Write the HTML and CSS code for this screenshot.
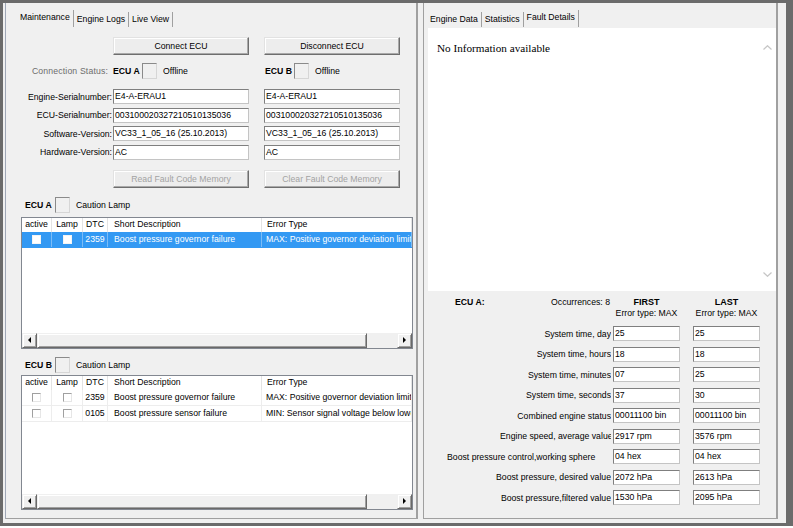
FILE: index.html
```html
<!DOCTYPE html>
<html>
<head>
<meta charset="utf-8">
<title>ECU Maintenance</title>
<link rel="stylesheet" href="styles.css">
</head>
<body>
<div class="window">
  <section class="panel left">
    <div class="tabs">
      <div class="tab sel">Maintenance</div>
      <div class="tab">Engine Logs</div>
      <div class="tab">Live View</div>
    </div>
    <div class="page">
      <div class="frow btnrow">
        <span class="lbl"></span>
        <button class="btn">Connect ECU</button>
        <button class="btn b2">Disconnect ECU</button>
      </div>
      <div class="frow status">
        <span class="lbl muted">Connection Status:</span>
        <div class="stat"><b>ECU A</b><span class="box"></span><span>Offline</span></div>
        <div class="stat b2 sb"><b>ECU B</b><span class="box"></span><span>Offline</span></div>
      </div>
      <div class="fields">
        <div class="frow"><span class="lbl">Engine-Serialnumber:</span><span class="inp">E4-A-ERAU1</span><span class="inp b2">E4-A-ERAU1</span></div>
        <div class="frow"><span class="lbl">ECU-Serialnumber:</span><span class="inp">003100020327210510135036</span><span class="inp b2">003100020327210510135036</span></div>
        <div class="frow"><span class="lbl">Software-Version:</span><span class="inp">VC33_1_05_16 (25.10.2013)</span><span class="inp b2">VC33_1_05_16 (25.10.2013)</span></div>
        <div class="frow"><span class="lbl">Hardware-Version:</span><span class="inp">AC</span><span class="inp b2">AC</span></div>
      </div>
      <div class="frow btnrow btnrow2">
        <span class="lbl"></span>
        <button class="btn dis">Read Fault Code Memory</button>
        <button class="btn dis b2">Clear Fault Code Memory</button>
      </div>

      <div class="lamp"><b>ECU A</b><span class="box"></span><span>Caution Lamp</span></div>
      <div class="list la">
        <div class="grid lhead"><span class="c">active</span><span class="c">Lamp</span><span class="c">DTC</span><span>Short Description</span><span>Error Type</span></div>
        <div class="grid lrow selrow"><span class="c"><i class="cb"></i></span><span class="c"><i class="cb"></i></span><span class="c">2359</span><span>Boost pressure governor failure</span><span>MAX: Positive governor deviation limit exceeded</span></div>
        <div class="lfill"></div>
        <div class="hs">
          <span class="arr raised"><i class="tri-l"></i></span>
          <span class="thumb raised"></span>
          <span class="track"></span>
          <span class="arr raised"><i class="tri-r"></i></span>
        </div>
      </div>

      <div class="lamp lampb"><b>ECU B</b><span class="box"></span><span>Caution Lamp</span></div>
      <div class="list lb">
        <div class="grid lhead"><span class="c">active</span><span class="c">Lamp</span><span class="c">DTC</span><span>Short Description</span><span>Error Type</span></div>
        <div class="grid lrow"><span class="c"><i class="cb"></i></span><span class="c"><i class="cb"></i></span><span class="c">2359</span><span>Boost pressure governor failure</span><span>MAX: Positive governor deviation limit exceeded</span></div>
        <div class="grid lrow"><span class="c"><i class="cb"></i></span><span class="c"><i class="cb"></i></span><span class="c">0105</span><span>Boost pressure sensor failure</span><span>MIN: Sensor signal voltage below lower limit</span></div>
        <div class="lfill"></div>
        <div class="hs">
          <span class="arr raised"><i class="tri-l"></i></span>
          <span class="thumb raised"></span>
          <span class="track"></span>
          <span class="arr raised"><i class="tri-r"></i></span>
        </div>
      </div>
    </div>
  </section>

  <section class="panel right">
    <div class="tabs rtabs">
      <div class="tab">Engine Data</div>
      <div class="tab">Statistics</div>
      <div class="tab sel">Fault Details</div>
    </div>
    <div class="rich">
      <div class="rtext">No Information available</div>
      <div class="vscroll">
        <svg width="9" height="5" viewBox="0 0 9 5"><polyline points="0.5,4.5 4.5,0.7 8.5,4.5" fill="none" stroke="#c6c6c6" stroke-width="1.2"/></svg>
        <svg width="9" height="5" viewBox="0 0 9 5"><polyline points="0.5,0.5 4.5,4.3 8.5,0.5" fill="none" stroke="#c6c6c6" stroke-width="1.2"/></svg>
      </div>
    </div>
    <div class="det">
      <div class="dhead">
        <div class="dcell1"><b>ECU A:</b><span>Occurrences: 8</span></div>
        <div class="dcol"><b>FIRST</b><span>Error type: MAX</span></div>
        <div class="dcol d2"><b>LAST</b><span>Error type: MAX</span></div>
      </div>
      <div class="drows">
        <div class="drow"><span class="dl"><span>System time, day</span></span><span class="dv">25</span><span class="dv d2">25</span></div>
        <div class="drow"><span class="dl"><span>System time, hours</span></span><span class="dv">18</span><span class="dv d2">18</span></div>
        <div class="drow"><span class="dl"><span>System time, minutes</span></span><span class="dv">07</span><span class="dv d2">25</span></div>
        <div class="drow"><span class="dl"><span>System time, seconds</span></span><span class="dv">37</span><span class="dv d2">30</span></div>
        <div class="drow"><span class="dl"><span>Combined engine status</span></span><span class="dv">00011100 bin</span><span class="dv d2">00011100 bin</span></div>
        <div class="drow"><span class="dl"><span class="clip-a">Engine speed, average value</span></span><span class="dv">2917 rpm</span><span class="dv d2">3576 rpm</span></div>
        <div class="drow"><span class="dl"><span class="clip-b">Boost pressure control,working sphere</span></span><span class="dv">04 hex</span><span class="dv d2">04 hex</span></div>
        <div class="drow"><span class="dl"><span>Boost pressure, desired value</span></span><span class="dv">2072 hPa</span><span class="dv d2">2613 hPa</span></div>
        <div class="drow"><span class="dl"><span>Boost pressure,filtered value</span></span><span class="dv">1530 hPa</span><span class="dv d2">2095 hPa</span></div>
      </div>
    </div>
  </section>
</div>
</body>
</html>
```
FILE: styles.css
```css
* { box-sizing: border-box; }

body {
  margin: 0;
  background: #ffffff;
  font-family: "Liberation Sans", Arial, sans-serif;
  font-size: 8.7px;
  color: #000;
}

.window {
  width: 793px;
  height: 526px;
  border-style: solid;
  border-color: #6b6b6b;
  border-width: 3px 7px 3px 3px;
  background: #f0f0f0;
  display: flex;
  align-items: flex-start;
  gap: 5px;
  padding-left: 2px;
}

.panel {
  height: 516px;
  border-bottom: 1px solid #a0a0a0;
  background: #f0f0f0;
  padding-top: 7px;
}

.left {
  width: 413px;
  border-left: 1px solid #9fa7b6;
  border-right: 2px solid #a0a0a0;
}

.right {
  width: 355px;
  border-left: 1px solid #a0a0a0;
  border-right: 2px solid #a0a0a0;
  padding-left: 4px;
}

/* tabs */
.tabs {
  display: flex;
  align-items: flex-end;
  height: 17px;
  margin-left: 11px;
}
.rtabs { margin-left: -1px; }

.tab {
  height: 15px;
  line-height: 15px;
  padding: 0 3px;
  border-right: 1px solid #a0a0a0;
  white-space: nowrap;
}
.tab.sel {
  height: 17px;
  line-height: 14px;
}

/* left form */
.page { padding-top: 10px; }

.frow {
  display: flex;
  align-items: center;
  height: 15px;
}

.lbl {
  flex: none;
  width: 107px;
  text-align: right;
  padding-right: 1px;
  white-space: nowrap;
}
.muted {
  color: #6d6d6d;
  padding-right: 5px;
  letter-spacing: 0.15px;
}

.b2 { margin-left: 15px; }

.btnrow { height: 18px; }
.btnrow2 { margin-top: 10.2px; }

.btn {
  flex: none;
  width: 136px;
  height: 18px;
  padding: 0;
  font: inherit;
  color: #000;
  background: #ededed;
  border: 1px solid;
  border-color: #e2e2e2 #6e6e6e #6e6e6e #e2e2e2;
  box-shadow: inset -1px -1px 0 #a9a9a9, inset 1px 1px 0 #ffffff;
}
.btn.dis { color: #a3a3a3; }

.status {
  height: 16px;
  margin-top: 8px;
}
.stat {
  flex: none;
  width: 136px;
  display: flex;
  align-items: center;
}
.stat.sb { padding-left: 1px; }
.stat b { width: 29px; }

.box {
  flex: none;
  width: 15px;
  height: 16px;
  border: 1px solid;
  border-color: #8a8a8a #d6d6d6 #d6d6d6 #8a8a8a;
  background: #f0f0f0;
  margin-right: 6px;
}

.fields {
  margin-top: 10px;
  display: flex;
  flex-direction: column;
  gap: 3.6px;
}

.inp {
  flex: none;
  width: 136px;
  height: 15px;
  background: #fff;
  border: 1px solid;
  border-color: #7f7f7f #c4c4c4 #c4c4c4 #7f7f7f;
  line-height: 13px;
  padding-left: 1px;
  white-space: nowrap;
  overflow: hidden;
}

.lamp {
  display: flex;
  align-items: center;
  height: 16px;
  margin: 9px 0 0 19px;
}
.lampb { margin-top: 8px; }
.lamp b { width: 30px; }

/* list views */
.list {
  margin-left: 15px;
  width: 392px;
  height: 132px;
  margin-top: 4px;
  border: 1px solid #828790;
  background: #fff;
  display: flex;
  flex-direction: column;
  overflow: hidden;
}
.list.lb {
  height: 135px;
  margin-top: 2px;
}

.grid {
  display: grid;
  grid-template-columns: 30px 31px 25px 154px 1fr;
}

.lhead { height: 14px; flex: none; }
.lhead > span {
  border-right: 1px solid #e3e3e3;
  line-height: 13px;
  padding-left: 5px;
  white-space: nowrap;
  overflow: hidden;
}
.lhead > span:nth-child(4) { padding-left: 6px; }

.lrow {
  height: 16px;
  flex: none;
  border-bottom: 1px solid #ededed;
}
.lrow > span {
  border-right: 1px solid #ededed;
  line-height: 15px;
  padding-left: 4px;
  white-space: nowrap;
  overflow: hidden;
}
.lrow > span:nth-child(4) { padding-left: 6px; }

.grid > span.c {
  padding-left: 0;
  text-align: center;
  display: flex;
  align-items: center;
  justify-content: center;
}

.selrow {
  background: #3399f3;
  color: #fff;
  border-bottom-color: #3399f3;
}
.selrow > span { border-right-color: #7bbcf7; }

.cb {
  display: block;
  width: 9px;
  height: 9px;
  border: 1px solid;
  border-color: #a0a0a0 #e6e6e6 #e6e6e6 #a0a0a0;
  background: #fff;
}
.selrow .cb {
  border-color: #f4f4f4;
  background: #fff;
}

.lfill { flex: 1; }

.hs {
  flex: none;
  height: 15px;
  display: flex;
  background: #f0f0f0;
}
.raised {
  background: #f0f0f0;
  border: 1px solid;
  border-color: #f0f0f0 #696969 #696969 #f0f0f0;
  box-shadow: inset 1px 1px 0 #ffffff, inset -1px -1px 0 #a0a0a0;
}
.arr {
  flex: none;
  width: 15px;
  height: 15px;
  display: flex;
  align-items: center;
  justify-content: center;
}
.thumb {
  flex: none;
  width: 330px;
  height: 15px;
}
.track { flex: 1; }

.tri-l, .tri-r {
  display: block;
  width: 0;
  height: 0;
  border-top: 3px solid transparent;
  border-bottom: 3px solid transparent;
}
.tri-l { border-right: 3px solid #000; }
.tri-r { border-left: 3px solid #000; }

/* right side */
.rich {
  height: 263px;
  margin-top: 1px;
  background: #fff;
  display: flex;
}
.rtext {
  flex: 1;
  padding: 14px 0 0 9px;
  font-family: "Liberation Serif", "Times New Roman", serif;
  font-size: 11.2px;
  line-height: 13px;
}
.vscroll {
  flex: none;
  width: 17px;
  display: flex;
  flex-direction: column;
  justify-content: space-between;
  align-items: center;
  padding: 17px 0 14px;
}
.vscroll svg { display: block; }

.det { padding-left: 19px; }

.dhead {
  display: flex;
  margin-top: 6px;
  height: 22px;
  line-height: 11px;
}
.dcell1 {
  width: 164px;
  display: flex;
  justify-content: space-between;
  padding: 0 1px 0 8px;
}
.dcol {
  width: 67px;
  margin-left: 2px;
  display: flex;
  flex-direction: column;
  align-items: center;
  white-space: nowrap;
}
.dcol b { font-size: 9px; }
.d2 { margin-left: 13px; }

.drows {
  margin-top: 7px;
  display: flex;
  flex-direction: column;
  gap: 5.5px;
}
.drow {
  display: flex;
  align-items: center;
  height: 15px;
}
.dl {
  flex: none;
  width: 164px;
  display: flex;
  justify-content: flex-end;
}
.dl > span {
  white-space: nowrap;
  overflow: hidden;
}
.dl > .clip-a { width: 111px; }
.dl > .clip-b { width: 164px; }

.dv {
  flex: none;
  width: 67px;
  height: 15px;
  margin-left: 2px;
  background: #fff;
  border: 1px solid;
  border-color: #7f7f7f #c4c4c4 #c4c4c4 #7f7f7f;
  line-height: 13px;
  padding-left: 1px;
  white-space: nowrap;
  overflow: hidden;
}
.dv.d2 { margin-left: 13px; }
```
